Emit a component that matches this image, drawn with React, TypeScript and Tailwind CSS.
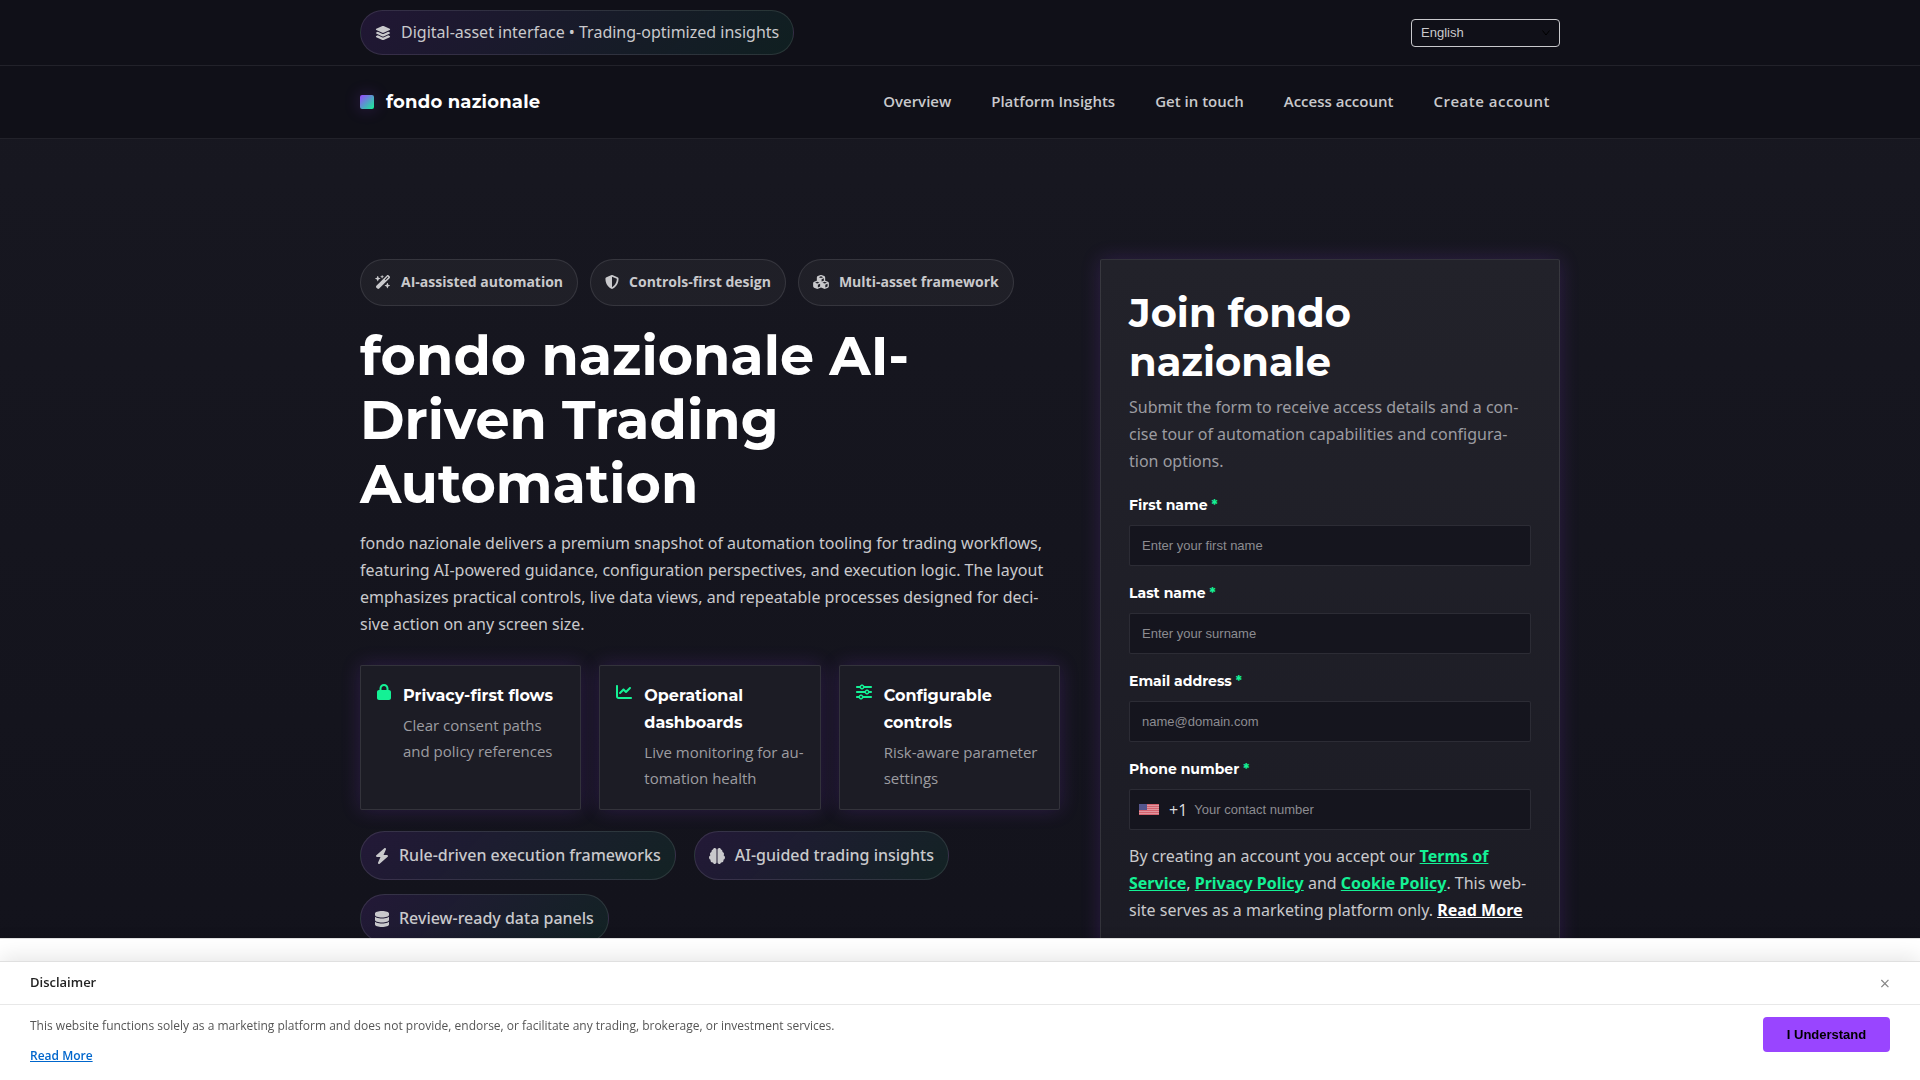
import React from "react";
import type { IconType } from "react-icons";
import {
  FaBolt,
  FaBrain,
  FaChartLine,
  FaCubes,
  FaDatabase,
  FaLayerGroup,
  FaLock,
  FaShieldHalved,
  FaSliders,
  FaWandMagicSparkles,
} from "react-icons/fa6";

const navLinks = ["Overview", "Platform Insights", "Get in touch", "Access account"];

type IconItem = { icon: IconType; width: string; label: string };

const chips: IconItem[] = [
  { icon: FaWandMagicSparkles, width: "w-4", label: "AI-assisted automation" },
  { icon: FaShieldHalved, width: "w-[14px]", label: "Controls-first design" },
  { icon: FaCubes, width: "w-4", label: "Multi-asset framework" },
];

const features: { icon: IconType; width: string; title: string; text: string }[] = [
  { icon: FaLock, width: "w-[14px]", title: "Privacy-first flows", text: "Clear consent paths and policy references" },
  { icon: FaChartLine, width: "w-4", title: "Operational dashboards", text: "Live monitoring for au\u00adtomation health" },
  { icon: FaSliders, width: "w-4", title: "Configurable controls", text: "Risk-aware parameter settings" },
];

const pills: IconItem[] = [
  { icon: FaBolt, width: "w-[14px]", label: "Rule-driven execution frameworks" },
  { icon: FaBrain, width: "w-4", label: "AI-guided trading insights" },
  { icon: FaDatabase, width: "w-[14px]", label: "Review-ready data panels" },
];

const fields = [
  { id: "first", label: "First name", type: "text", placeholder: "Enter your first name" },
  { id: "last", label: "Last name", type: "text", placeholder: "Enter your surname" },
  { id: "email", label: "Email address", type: "email", placeholder: "name@domain.com" },
];

function FieldLabel({ id, children }: { id: string; children: React.ReactNode }) {
  return (
    <label
      htmlFor={id}
      className="mb-2 block font-['Montserrat',sans-serif] text-[14px] leading-6 font-bold text-white"
    >
      {children} <span className="text-[#14f195]">*</span>
    </label>
  );
}

function UsFlag() {
  return (
    <svg viewBox="0 0 20 11" className="h-[11px] w-5" aria-hidden="true">
      <rect width="20" height="11" fill="#e3a3aa" />
      {[0, 2, 4, 6, 8, 10].map((y) => (
        <rect key={y} y={y} width="20" height="1.2" fill="#d4626e" />
      ))}
      <rect width="8" height="6" fill="#55568e" />
    </svg>
  );
}

function TopBar() {
  return (
    <div className="border-b border-white/8 bg-[#101018]">
      <div className="mx-auto flex max-w-[1200px] items-center justify-between py-[10px]">
        <div className="flex items-center gap-[10px] rounded-full border border-white/10 bg-[linear-gradient(135deg,rgba(153,69,255,0.12),rgba(20,241,149,0.07))] px-[14px] py-2 font-['Noto_Sans',sans-serif] text-base leading-[27px] text-[#c9c9cc]">
          <FaLayerGroup className="size-4" />
          <span>Digital-asset interface • Trading-optimized insights</span>
        </div>
        <div className="relative">
          <select
            aria-label="Language"
            className="h-7 w-[149px] appearance-none rounded-[4px] border border-[#c9c9cc] bg-transparent px-[9px] font-['Liberation_Sans',sans-serif] text-[13px] text-[#c9c9cc]"
          >
            <option>English</option>
          </select>
          <svg
            viewBox="0 0 8 6"
            className="pointer-events-none absolute top-[11px] right-[10px] h-[6px] w-2 fill-none stroke-black"
            aria-hidden="true"
          >
            <path d="M0.5 0.5 4 5 7.5 0.5" />
          </svg>
        </div>
      </div>
    </div>
  );
}

function Header() {
  return (
    <header className="border-b border-white/8 bg-[#101018]">
      <div className="mx-auto flex h-[72px] max-w-[1200px] items-center justify-between">
        <a href="#" className="flex items-center gap-3 font-['Montserrat',sans-serif] text-lg font-bold tracking-[0.2px] text-white">
          <span className="size-[14px] rounded-[2px] bg-[linear-gradient(135deg,#9945ff,#14f195)] shadow-[0_0_16px_rgba(153,69,255,0.25)]" />
          fondo nazionale
        </a>
        <nav className="flex items-center gap-10 pr-[10px] pb-[2px] text-[15px] font-semibold text-[#c9c9cc]">
          {navLinks.map((l) => (
            <a key={l} href="#">
              {l}
            </a>
          ))}
          <a href="#" className="tracking-[0.5px]">
            Create account
          </a>
        </nav>
      </div>
    </header>
  );
}

function Intro() {
  return (
    <div>
      <div className="flex flex-wrap gap-3">
        {chips.map(({ icon: Icon, width, label }) => (
          <div
            key={label}
            className="flex items-center gap-[10px] rounded-full border border-white/10 bg-white/4 px-[14px] pt-[9px] pb-[11px] text-[14px] leading-[25px] font-bold text-[#c9c9cc]"
          >
            <Icon className={`h-[14px] ${width}`} />
            {label}
          </div>
        ))}
      </div>
      <h1 className="mt-[18px] font-['Montserrat',sans-serif] text-[54px] leading-[64px] font-bold text-white">
        fondo nazionale AI-Driven Trading Automation
      </h1>
      <p className="mt-[14px] font-['Noto_Sans',sans-serif] text-base leading-[27px] text-[#c9c9cc]">
        fondo nazionale delivers a premium snapshot of automation tooling for trading workflows, featuring
        AI-powered guidance, configuration perspectives, and execution logic. The layout emphasizes practical
        controls, live data views, and repeatable processes designed for deci&shy;sive action on any screen size.
      </p>
      <div className="mt-[27px] grid grid-cols-3 gap-[18px]">
        {features.map(({ icon: Icon, width, title, text }) => (
          <div
            key={title}
            className="flex gap-3 rounded-[2px] border border-white/10 bg-[#1c1c25] p-4 pb-[18px] shadow-[0_0_20px_rgba(153,69,255,0.18)]"
          >
            <Icon className={`mt-[2px] h-4 shrink-0 text-[#14f195] ${width}`} />
            <div>
              <h2 className="font-['Montserrat',sans-serif] text-base leading-[27px] font-bold text-white">{title}</h2>
              <p className="mt-[3px] text-[15px] leading-[26px] text-[#9c9ca1]">{text}</p>
            </div>
          </div>
        ))}
      </div>
      <div className="mt-[21px] flex flex-wrap gap-x-[18px] gap-y-[14px]">
        {pills.map(({ icon: Icon, width, label }) => (
          <div
            key={label}
            className="flex items-center gap-[10px] rounded-full border border-white/10 bg-[linear-gradient(135deg,rgba(153,69,255,0.12),rgba(20,241,149,0.07))] px-[14px] py-[10px] font-['Noto_Sans',sans-serif] text-base leading-[27px] font-medium text-[#c9c9cc]"
          >
            <Icon className={`h-4 ${width}`} />
            {label}
          </div>
        ))}
      </div>
    </div>
  );
}

function SignupForm() {
  return (
    <form className="rounded-[2px] border border-white/10 bg-[linear-gradient(180deg,#22222a,#1b1b24)] p-7 shadow-[0_0_20px_rgba(153,69,255,0.18)]">
      <h2 className="font-['Montserrat',sans-serif] text-[40px] leading-[49px] font-bold text-white">
        Join fondo nazionale
      </h2>
      <p className="mt-2 mb-[18px] font-['Noto_Sans',sans-serif] text-base leading-[27px] text-[#9c9ca1]">
        Submit the form to receive access details and a con&shy;cise tour of automation capabilities and
        configura&shy;tion options.
      </p>
      <div className="flex flex-col gap-[15px]">
        {fields.map((f) => (
          <div key={f.id}>
            <FieldLabel id={f.id}>{f.label}</FieldLabel>
            <input
              id={f.id}
              type={f.type}
              placeholder={f.placeholder}
              className="block h-[41px] w-full rounded-[2px] border border-white/10 bg-[#15151e] px-3 font-['Liberation_Sans',sans-serif] text-[13px] text-white placeholder:text-[#8c8c91]"
            />
          </div>
        ))}
        <div>
          <FieldLabel id="phone">Phone number</FieldLabel>
          <div className="flex h-[41px] items-center rounded-[2px] border border-white/10 bg-[#15151e] pl-[9px]">
            <UsFlag />
            <span className="ml-[10px] text-base text-[#dedee0]">+1</span>
            <input
              id="phone"
              type="tel"
              placeholder="Your contact number"
              className="ml-[7px] h-full min-w-0 flex-1 bg-transparent font-['Liberation_Sans',sans-serif] text-[13px] text-white placeholder:text-[#8c8c91]"
            />
          </div>
        </div>
      </div>
      <p className="mt-[13px] pb-16 font-['Noto_Sans',sans-serif] text-base leading-[27px] text-[#c9c9cc]">
        By creating an account you accept our{" "}
        <a href="#" className="font-bold text-[#14f195] underline">Terms of Service</a>,{" "}
        <a href="#" className="font-bold text-[#14f195] underline">Privacy Policy</a> and{" "}
        <a href="#" className="font-bold text-[#14f195] underline">Cookie Policy</a>. This web&shy;site serves as
        a marketing platform only.{" "}
        <a href="#" className="font-bold text-white underline">Read More</a>
      </p>
    </form>
  );
}

function Disclaimer() {
  return (
    <div className="fixed inset-x-0 bottom-0 border-t border-[#e0e0e0] bg-white pt-[22px] shadow-[0_-2px_10px_rgba(0,0,0,0.1)]">
      <div className="border-t border-[#e0e0e0] bg-white shadow-[0_-4px_20px_rgba(0,0,0,0.1)]">
        <div className="flex h-[43px] items-center justify-between border-b border-[#e8e8e8] px-[30px]">
          <h3 className="text-[13px] font-semibold text-[#222]">Disclaimer</h3>
          <button type="button" aria-label="Close" className="text-lg leading-none text-[#888]">
            ×
          </button>
        </div>
        <div className="flex items-start justify-between px-[30px] pt-3 pb-[15px]">
          <div className="flex flex-col items-start gap-3 text-xs leading-[18px]">
            <p className="text-[#555]">
              This website functions solely as a marketing platform and does not provide, endorse, or facilitate any
              trading, brokerage, or investment services.
            </p>
            <a href="#" className="font-semibold text-[#0066cc] underline">
              Read More
            </a>
          </div>
          <button
            type="button"
            className="h-[35px] w-[127px] rounded-[4px] bg-[#9945ff] font-['Liberation_Sans',sans-serif] text-[13px] font-bold text-black"
          >
            I Understand
          </button>
        </div>
      </div>
    </div>
  );
}

export default function App() {
  return (
    <div className="h-screen overflow-hidden bg-[linear-gradient(180deg,#181821,#12121b)] font-['Open_Sans',sans-serif]">
      <TopBar />
      <Header />
      <main className="mx-auto grid max-w-[1200px] grid-cols-[minmax(0,1fr)_460px] items-start gap-10 pt-[120px]">
        <Intro />
        <SignupForm />
      </main>
      <Disclaimer />
    </div>
  );
}
